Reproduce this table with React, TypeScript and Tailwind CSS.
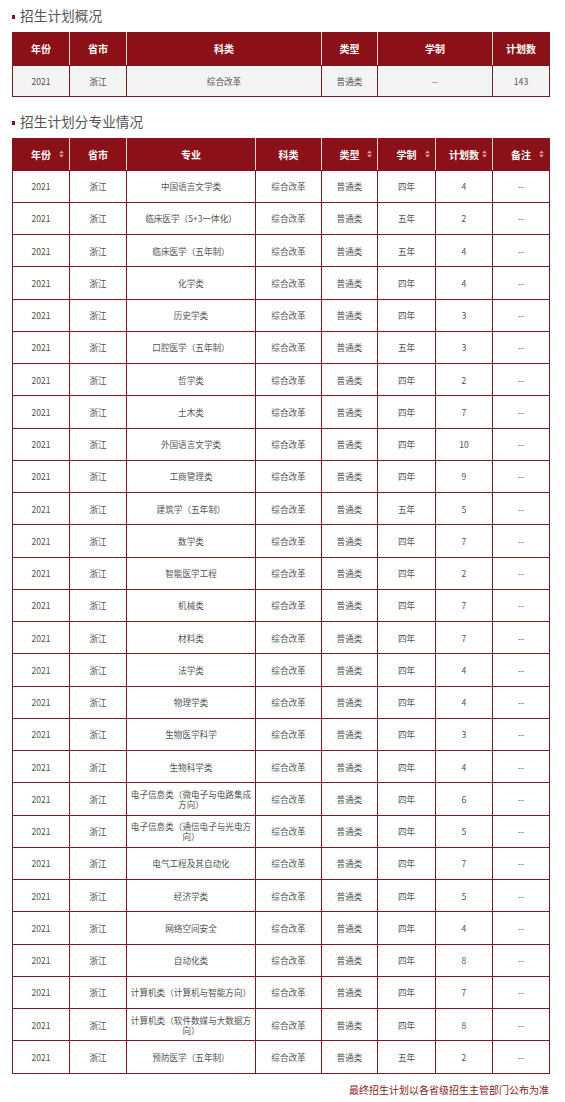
import React from "react";

const rows: [string, string, string, string][] = [
  ["中国语言文学类", "四年", "4", ""],
  ["临床医学（5+3一体化）", "五年", "2", ""],
  ["临床医学（五年制）", "五年", "4", ""],
  ["化学类", "四年", "4", ""],
  ["历史学类", "四年", "3", ""],
  ["口腔医学（五年制）", "五年", "3", ""],
  ["哲学类", "四年", "2", ""],
  ["土木类", "四年", "7", ""],
  ["外国语言文学类", "四年", "10", ""],
  ["工商管理类", "四年", "9", ""],
  ["建筑学（五年制）", "五年", "5", ""],
  ["数学类", "四年", "7", ""],
  ["智能医学工程", "四年", "2", ""],
  ["机械类", "四年", "7", ""],
  ["材料类", "四年", "7", ""],
  ["法学类", "四年", "4", ""],
  ["物理学类", "四年", "4", ""],
  ["生物医学科学", "四年", "3", ""],
  ["生物科学类", "四年", "4", ""],
  ["电子信息类（微电子与电路集成方向）", "四年", "6", ""],
  ["电子信息类（通信电子与光电方向）", "四年", "5", ""],
  ["电气工程及其自动化", "四年", "7", ""],
  ["经济学类", "四年", "5", ""],
  ["网络空间安全", "四年", "4", ""],
  ["自动化类", "四年", "8", ""],
  ["计算机类（计算机与智能方向）", "四年", "7", ""],
  ["计算机类（软件数媒与大数据方向）", "四年", "8", ""],
  ["预防医学（五年制）", "五年", "2", ""],
];

function SortIcon() {
  return (
    <svg
      width="5"
      height="8"
      viewBox="0 0 5 8"
      className="absolute right-[5px] top-1/2 -translate-y-1/2"
    >
      <path d="M2.5 0.5 L4.8 3.3 L0.2 3.3 Z" fill="#e9a6ab" />
      <path d="M2.5 7.5 L4.8 4.7 L0.2 4.7 Z" fill="#e9a6ab" />
    </svg>
  );
}

function Title({ children }: { children: React.ReactNode }) {
  return (
    <div className="flex items-center h-[32px] pl-[12px]">
      <span className="w-[3px] h-[4px] bg-[#8b1018] mr-[5px] mt-[1px]" />
      <span className="text-[13.7px] text-[#555] leading-none">{children}</span>
    </div>
  );
}

const th =
  "bg-[#8b1018] text-white font-bold text-[10px] border-x border-x-[#e8d3d4] first:border-l-[#7b1a22] last:border-r-[#7b1a22] border-y border-y-[#7b1a22] p-0 relative";
const td = "border border-[#7b1a22] text-[8.6px] text-[#555] px-[3px] py-0 leading-[10px]";

export default function App() {
  return (
    <div
      className="w-[565px] bg-white"
      style={{ fontFamily: '"Noto Sans CJK SC", "Noto Sans", sans-serif' }}
    >
      <Title>招生计划概况</Title>
      <div className="px-[12px]">
        <table className="w-[537px] table-fixed border-collapse text-center">
          <colgroup>
            <col className="w-[57px]" />
            <col className="w-[57px]" />
            <col className="w-[195px]" />
            <col className="w-[56px]" />
            <col className="w-[115px]" />
            <col className="w-[57px]" />
          </colgroup>
          <thead>
            <tr className="h-[32.5px]">
              {["年份", "省市", "科类", "类型", "学制", "计划数"].map((h) => (
                <th key={h} className={th}>
                  {h}
                </th>
              ))}
            </tr>
          </thead>
          <tbody>
            <tr className="h-[31.5px] bg-[#f4f4f4]">
              <td className={td}>2021</td>
              <td className={td}>浙江</td>
              <td className={td}>综合改革</td>
              <td className={td}>普通类</td>
              <td className={td}>--</td>
              <td className={td}>143</td>
            </tr>
          </tbody>
        </table>
      </div>
      <div className="h-[9px]" />
      <Title>招生计划分专业情况</Title>
      <div className="px-[12px]">
        <table className="w-[537px] table-fixed border-collapse text-center">
          <colgroup>
            <col className="w-[57px]" />
            <col className="w-[57px]" />
            <col className="w-[129px]" />
            <col className="w-[66px]" />
            <col className="w-[56px]" />
            <col className="w-[58px]" />
            <col className="w-[57px]" />
            <col className="w-[57px]" />
          </colgroup>
          <thead>
            <tr className="h-[31.5px]">
              <th className={th}>
                年份
                <SortIcon />
              </th>
              <th className={th}>省市</th>
              <th className={th}>专业</th>
              <th className={th}>科类</th>
              <th className={th}>
                类型
                <SortIcon />
              </th>
              <th className={th}>
                学制
                <SortIcon />
              </th>
              <th className={th}>
                计划数
                <SortIcon />
              </th>
              <th className={th}>
                备注
                <SortIcon />
              </th>
            </tr>
          </thead>
          <tbody>
            {rows.map((r, i) => (
              <tr key={i} className="h-[32.25px] bg-white">
                <td className={td}>2021</td>
                <td className={td}>浙江</td>
                <td className={td}>{r[0]}</td>
                <td className={td}>综合改革</td>
                <td className={td}>普通类</td>
                <td className={td}>{r[1]}</td>
                <td className={td}>{r[2]}</td>
                <td className={td}>--</td>
              </tr>
            ))}
          </tbody>
        </table>
      </div>
      <div className="px-[16px] pt-[9px] pb-[8px] text-right text-[10px] leading-[14px] text-[#8b1a1a]">
        最终招生计划以各省级招生主管部门公布为准
      </div>
    </div>
  );
}
